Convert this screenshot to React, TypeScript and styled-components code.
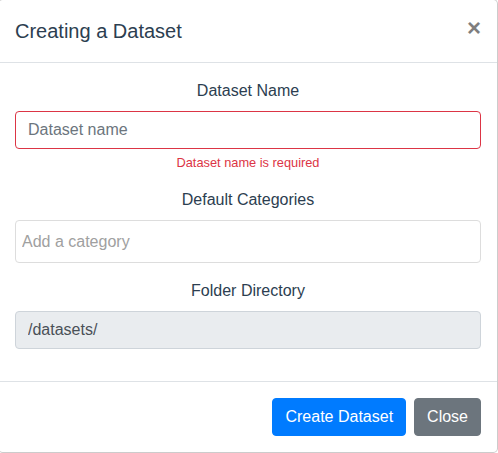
import React from 'react'
import styled, { createGlobalStyle } from 'styled-components'

const GlobalStyle = createGlobalStyle`
  html, body {
    margin: 0;
    padding: 0;
    background: #fff;
    overflow: hidden;
  }
  body {
    font-family: "Liberation Sans", Arial, Helvetica, sans-serif;
    font-size: 16px;
    line-height: 1.5;
    color: #2c3e50;
  }
  * {
    box-sizing: border-box;
  }
`

const ModalContent = styled.div`
  margin: -1px 0 0 -2px;
  width: 500px;
  display: flex;
  flex-direction: column;
  background: #fff;
  border: 1px solid rgba(0, 0, 0, 0.2);
  border-radius: 0.3rem;
`

const Header = styled.div`
  display: flex;
  align-items: flex-start;
  justify-content: space-between;
  padding: 16px;
  border-bottom: 1px solid #dee2e6;
`

const Title = styled.h5`
  margin: 0;
  font-size: 20px;
  font-weight: 500;
  line-height: 1.5;
`

const CloseX = styled.button`
  margin: -16px -16px -16px auto;
  padding: 16px;
  background: transparent;
  border: 0;
  font-family: inherit;
  font-size: 24px;
  font-weight: 700;
  line-height: 1;
  color: #000;
  text-shadow: 0 1px 0 #fff;
  opacity: 0.5;
  cursor: pointer;
`

const Body = styled.div`
  padding: 16px;
`

const Group = styled.div`
  margin-bottom: 16px;
  text-align: center;
`

const Label = styled.label`
  display: inline-block;
  margin-bottom: 8px;
`

const Input = styled.input<{ $invalid?: boolean }>`
  display: block;
  width: 100%;
  height: 38px;
  padding: 6px 12px;
  font-family: inherit;
  font-size: 16px;
  line-height: 1.5;
  color: #495057;
  background: #fff;
  border: 1px solid ${p => (p.$invalid ? '#dc3545' : '#ced4da')};
  border-radius: 4px;
  outline: none;

  &::placeholder {
    color: #6c757d;
  }
  &[readonly] {
    background: #e9ecef;
  }
`

const TagInput = styled.input`
  display: block;
  width: 100%;
  height: 43px;
  padding: 0 6px;
  font-family: inherit;
  font-size: 16px;
  color: #495057;
  background: #fff;
  border: 1px solid #ddd;
  border-radius: 4px;
  outline: none;

  &::placeholder {
    color: #a0a0a0;
  }
`

const Feedback = styled.div`
  margin-top: 4px;
  font-size: 80%;
  color: #dc3545;
`

const Footer = styled.div`
  display: flex;
  align-items: center;
  justify-content: flex-end;
  padding: 12px;
  border-top: 1px solid #dee2e6;
`

const Button = styled.button<{ $variant: 'primary' | 'secondary' }>`
  margin: 4px;
  padding: 6px 12px;
  font-family: inherit;
  font-size: 16px;
  line-height: 1.5;
  color: #fff;
  background: ${p => (p.$variant === 'primary' ? '#007bff' : '#6c757d')};
  border: 1px solid ${p => (p.$variant === 'primary' ? '#007bff' : '#6c757d')};
  border-radius: 4px;
  cursor: pointer;
`

export default function App(): React.ReactElement {
  return (
    <>
      <GlobalStyle />
      <ModalContent>
        <Header>
          <Title>Creating a Dataset</Title>
          <CloseX aria-label="Close">&times;</CloseX>
        </Header>
        <Body>
          <Group>
            <Label>Dataset Name</Label>
            <Input $invalid placeholder="Dataset name" />
            <Feedback>Dataset name is required</Feedback>
          </Group>
          <Group>
            <Label>Default Categories</Label>
            <TagInput placeholder="Add a category" />
          </Group>
          <Group>
            <Label>Folder Directory</Label>
            <Input readOnly value="/datasets/" />
          </Group>
        </Body>
        <Footer>
          <Button $variant="primary">Create Dataset</Button>
          <Button $variant="secondary">Close</Button>
        </Footer>
      </ModalContent>
    </>
  )
}
